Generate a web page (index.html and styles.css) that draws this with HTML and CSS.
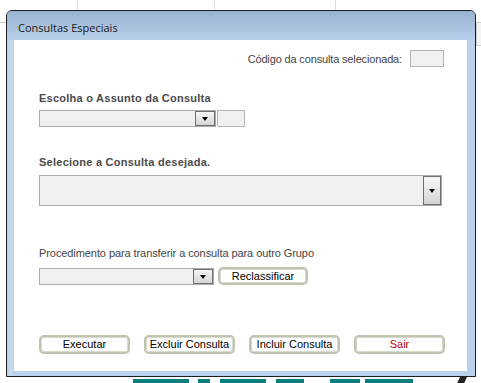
FILE: index.html
```html
<!DOCTYPE html>
<html lang="pt">
<head>
<meta charset="utf-8">
<title>Consultas Especiais</title>
<link rel="stylesheet" href="styles.css">
</head>
<body>
<div class="desk">
  <div class="vline v1"></div>
  <div class="vline v2"></div>
  <div class="vline v3"></div>
  <div class="hline"></div>
  <div class="sidebox"></div>
  <div class="teal t1"></div>
  <div class="teal t2"></div>
  <div class="teal t3"></div>
  <div class="teal t4"></div>
  <div class="teal t5"></div>
  <div class="teal t6"></div>
  <div class="slant"></div>

  <div class="window">
    <div class="titlebar">Consultas Especiais</div>
    <div class="frame">
      <div class="client">
        <div class="code-row">
          <span class="txt">Código da consulta selecionada:</span>
          <span class="box code-box"></span>
        </div>

        <div class="label bold l1">Escolha o Assunto da Consulta</div>
        <div class="row">
          <div class="combo c1"><span class="fill"></span><span class="drop"><i class="tri"></i></span></div>
          <span class="box small-box"></span>
        </div>

        <div class="label bold l2">Selecione a Consulta desejada.</div>
        <div class="combo c2"><span class="fill"></span><span class="drop"><i class="tri"></i></span></div>

        <div class="label l3">Procedimento para transferir a consulta para outro Grupo</div>
        <div class="row gap4">
          <div class="combo c3"><span class="fill"></span><span class="drop"><i class="tri"></i></span></div>
          <button class="btn reclass">Reclassificar</button>
        </div>

        <div class="buttons">
          <button class="btn">Executar</button>
          <button class="btn">Excluir Consulta</button>
          <button class="btn">Incluir Consulta</button>
          <button class="btn sair">Sair</button>
        </div>
      </div>
    </div>
  </div>
</div>
</body>
</html>
```

FILE: styles.css
```css
* { box-sizing: border-box; }
html, body { margin: 0; padding: 0; background: #ffffff; }
body { width: 481px; height: 383px; overflow: hidden; font-family: "Liberation Sans", Arial, sans-serif; font-size: 11px; color: #333; }
.desk { position: relative; width: 481px; height: 383px; }

.vline { position: absolute; top: 0; width: 1px; height: 10px; background: #dcdcdc; }
.v1 { left: 77px; }
.v2 { left: 214px; }
.v3 { left: 335px; }
.hline { position: absolute; left: 0; top: 22px; width: 7px; height: 1px; background: #c8c8c8; }
.sidebox { position: absolute; left: 476px; top: 22px; width: 8px; height: 24px; border: 1px solid #d0d0d0; background: #f4f4f4; }
.teal { position: absolute; top: 379px; height: 4px; background: #087f7c; }
.t1 { left: 133px; width: 56px; }
.t2 { left: 198px; width: 12px; }
.t3 { left: 220px; width: 46px; }
.t4 { left: 276px; width: 28px; }
.t5 { left: 330px; width: 30px; }
.t6 { left: 365px; width: 48px; }
.slant { position: absolute; left: 460px; top: 362px; width: 7px; height: 30px; background: #222; transform: skewX(-25deg); }

.window {
  position: absolute; left: 6px; top: 10px; width: 470px; height: 367px;
  border: 1px solid #1e1e1e; border-radius: 6px 6px 0 0;
  background: #b9d1ea; display: flex; flex-direction: column; overflow: hidden;
}
.titlebar {
  height: 29px; flex: none; padding: 10px 0 0 11px;
  background: linear-gradient(#98b2d0, #b7cfe9);
  font-family: "Open Sans", "Liberation Sans", sans-serif; font-size: 11px; color: #1a1a1a; line-height: 14px;
}
.frame { flex: 1; padding: 0 8px 5px 7px; background: linear-gradient(90deg, #b9d1ea 0, #c6daef 4px, #b9d1ea 7px); }
.client { height: 100%; background: #fff; padding-left: 25px; display: flex; flex-direction: column; }

.code-row { margin-top: 10px; height: 17px; display: flex; justify-content: flex-end; align-items: center; gap: 8px; padding-right: 23px; color: #444; letter-spacing: -0.15px; }
.box { display: block; background: #f0f0f0; border: 1px solid #b4b4b4; }
.code-box { width: 34px; height: 17px; }
.small-box { width: 28px; height: 17px; }

.label { line-height: 13px; color: #444; }
.bold { font-weight: bold; color: #4a4a4a; letter-spacing: 0.25px; }
.l1 { margin-top: 25px; }
.l2 { margin-top: 29px; }
.l3 { margin-top: 41px; color: #444; letter-spacing: -0.08px; }

.row { display: flex; align-items: flex-start; gap: 1px; margin-top: 5px; }
.gap4 { gap: 4px; margin-top: 7px; }

.combo { display: flex; border: 1px solid #acacac; background: #f0f0f0; }
.combo .fill { flex: 1; }
.drop { width: 20px; border: 1px solid #6e6e6e; background: linear-gradient(#f6f6f6, #d6d6d6); display: flex; align-items: center; justify-content: center; }
.tri { display: block; width: 0; height: 0; border-left: 3.5px solid transparent; border-right: 3.5px solid transparent; border-top: 4px solid #000; margin-top: 1px; }
.c1 { width: 177px; height: 17px; }
.c2 { width: 403px; height: 31px; margin-top: 6px; }
.c2 .drop { width: 18px; }
.c3 { width: 175px; height: 17px; margin-top: 1px; }

.btn {
  font-family: "Liberation Sans", Arial, sans-serif; font-size: 11px; color: #000;
  width: 91px; height: 19px; padding: 0; background: #fff;
  border: 2px solid #bfc3b1; border-radius: 5px; box-shadow: inset 0 0 0 1px #d8dacd;
  line-height: 13px;
}
.reclass { width: 90px; height: 18px; }
.buttons { margin-top: 50px; display: flex; gap: 14px; }
.sair { color: #c00000; }
```
